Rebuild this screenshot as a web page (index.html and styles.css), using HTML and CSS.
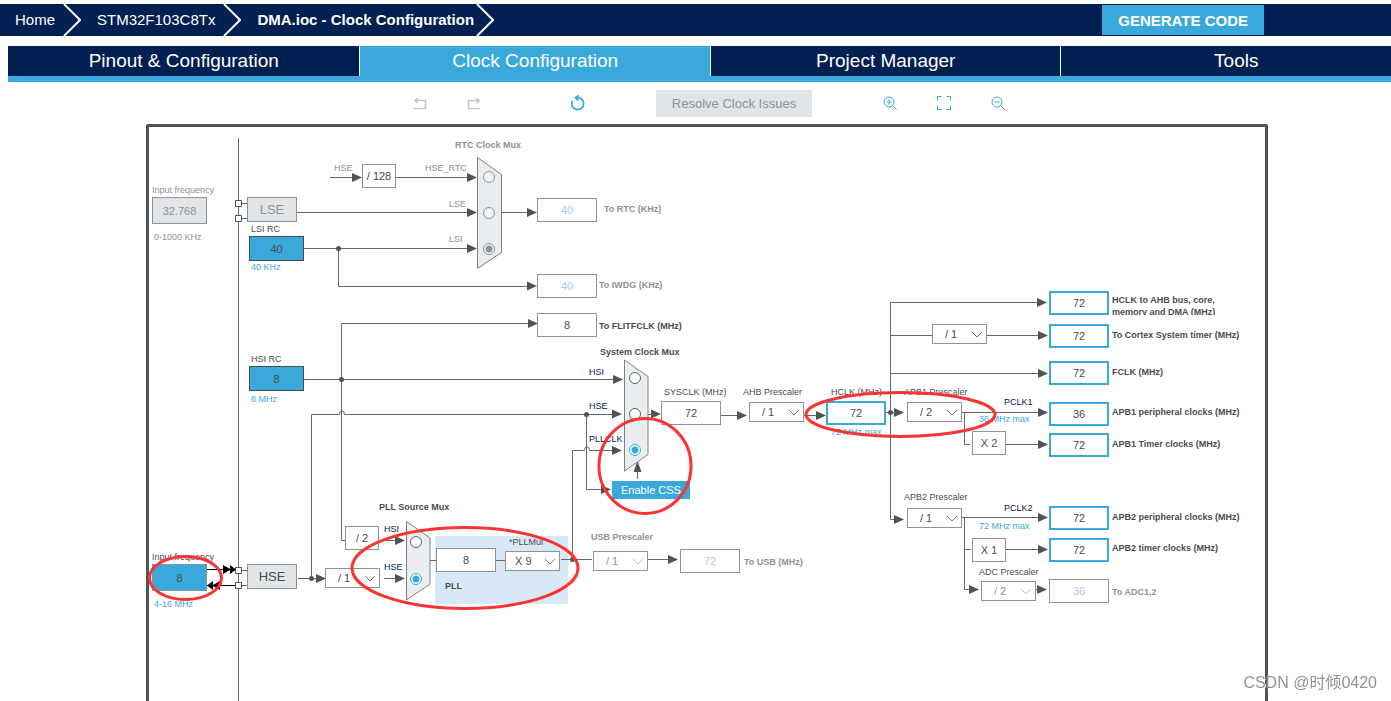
FILE: index.html
```html
<!DOCTYPE html>
<html lang="en">
<head>
<meta charset="utf-8">
<title>DMA.ioc - Clock Configuration</title>
<link rel="stylesheet" href="styles.css">
</head>
<body>
<header class="topbar">
  <nav class="crumbs">
    <a href="#">Home</a>
    <svg class="crumb-arrow" viewBox="0 0 18 32"><path d="M1 0 17 16 1 32"/></svg>
    <a href="#">STM32F103C8Tx</a>
    <svg class="crumb-arrow" viewBox="0 0 18 32"><path d="M1 0 17 16 1 32"/></svg>
    <a href="#" class="current">DMA.ioc - Clock Configuration</a>
    <svg class="crumb-arrow last" viewBox="0 0 18 32"><path d="M1 0 17 16 1 32"/></svg>
  </nav>
  <button class="generate">GENERATE CODE</button>
</header>

<nav class="tabs">
  <button>Pinout &amp; Configuration</button>
  <button class="active">Clock Configuration</button>
  <button>Project Manager</button>
  <button>Tools</button>
</nav>

<div class="toolbar">
  <div class="tools">
    <button class="tool off" aria-label="Undo"><svg viewBox="0 0 14 14"><path d="M1 12.500H12.500V4.500H2M4.500 2 2 4.500 4.500 7" stroke-width="1.600"/></svg></button>
    <button class="tool off" aria-label="Redo"><svg viewBox="0 0 14 14"><path d="M13 12.500H1.500V4.500H12M9.500 2 12 4.500 9.500 7" stroke-width="1.600"/></svg></button>
  </div>
  <button class="tool" aria-label="Reset"><svg viewBox="0 0 14 16"><path d="M1.200 6A6 6 0 1 0 5 2.800M7.500 .500 4.500 2.800 7.200 5.500" stroke-width="1.800"/></svg></button>
  <button class="resolve" disabled>Resolve Clock Issues</button>
  <div class="tools">
    <button class="tool" aria-label="Zoom in"><svg viewBox="0 0 14 14"><circle cx="6" cy="6" r="5"/><path d="M9.600 9.600 13.500 13.500M3.500 6H8.500M6 3.500V8.500"/></svg></button>
    <button class="tool" aria-label="Fit"><svg viewBox="0 0 14 14"><path d="M.500 4.500V.500H4.500M9.500 .500H13.500V4.500M13.500 9.500V13.500H9.500M4.500 13.500H.500V9.500"/></svg></button>
    <button class="tool" aria-label="Zoom out"><svg viewBox="0 0 14 14"><circle cx="6" cy="6" r="5"/><path d="M9.600 9.600 13.500 13.500M3.500 6H8.500"/></svg></button>
  </div>
</div>

<main class="canvas">
  <div class="frame"></div>
  <div class="pll-area"></div>

  <svg class="layer" viewBox="0 120 1391 581" width="1391" height="581">
    <defs>
      <path id="r" d="M-10 -4.500 0 0-10 4.500z"/>
      <path id="v" d="M-5 -2.500 0 2.500 5 -2.500"/>
    </defs>
    <g class="wire">
      <path d="M238.500 138V701"/>
      <path d="M241 203.500H247M241 218.500H247M241 570.500H247M241 585.500H247"/>
      <path d="M330 177.500H354M396 177.500H470M297 212.500H470M304 248.500H470M338.500 248.500V286.500H530M502 212.500H530"/>
      <path d="M304 379.500H616M530 323.500H341.500V540.500H345"/>
      <path d="M311.500 578.500V414.500H339.500A2 3 0 0 1 344.500 414.500H616"/>
      <path d="M298 578.500H318M384 578.500H398M379 540.500H398"/>
      <path d="M586.500 414.500V489.500H604M572.500 559.500V450.500H584.500A2 3 0 0 1 589.500 450.500H614"/>
      <path d="M430 560.500H436M496 560.500H505M561 559.500H592M637.500 479V470"/>
      <path d="M648 414.500H655M721 415.500H740M804 415.500H820M886 412.500H898"/>
      <path d="M1040 302.500H890.500V519.500H896M890.500 335.500H932M987 335.500H1040M890.500 373.500H1040"/>
      <path d="M962 412.500H1040M964.500 412.500V444.500H970M1006 444.500H1040"/>
      <path d="M962 517.500H1040M964.500 517.500V589.500H971M964.500 549.500H971M1006 549.500H1040M1036 589.500H1040M648 559.500H670"/>
      <path class="black" d="M207 569.500H235M207 585.500H235"/>
    </g>
    <g class="box">
      <path d="M235.500 200.500h6v6h-6zM235.500 215.500h6v6h-6zM235.500 567.500h6v6h-6zM235.500 582.500h6v6h-6z"/>
    </g>
    <g class="head">
      <use href="#r" x="362" y="177.500"/><use href="#r" x="477" y="177.500"/><use href="#r" x="477" y="212.500"/><use href="#r" x="477" y="248.500"/>
      <use href="#r" x="537" y="286"/><use href="#r" x="537" y="212.500"/><use href="#r" x="538" y="323.500"/>
      <use href="#r" x="623" y="379.500"/><use href="#r" x="622" y="414"/><use href="#r" x="622" y="450.500"/>
      <use href="#r" x="326" y="578.500"/><use href="#r" x="405" y="578.500"/><use href="#r" x="405" y="540.500"/>
      <use href="#r" x="611" y="489.500"/><use href="#r" x="661" y="414"/><use href="#r" x="747" y="415.500"/><use href="#r" x="826" y="415.500"/><use href="#r" x="904" y="412.500"/>
      <use href="#r" x="1047" y="302.500"/><use href="#r" x="1048" y="335.500"/><use href="#r" x="1048" y="373.500"/><use href="#r" x="1048" y="412.500"/><use href="#r" x="1048" y="444.500"/>
      <use href="#r" x="904" y="519.500"/><use href="#r" x="1048" y="517.500"/><use href="#r" x="1048" y="549.500"/><use href="#r" x="979" y="589.500"/><use href="#r" x="1047" y="589.500"/><use href="#r" x="678" y="559.500"/>
      <path d="M633.500 472 637.500 461 641.500 472z"/>
      <circle cx="338.500" cy="248.500" r="2.500"/><circle cx="341.500" cy="379.500" r="2.500"/><circle cx="311.500" cy="578.500" r="2.500"/>
      <circle cx="586.500" cy="414.500" r="2.500"/><circle cx="572.500" cy="559.500" r="2.500"/><circle cx="890.500" cy="412.500" r="2.500"/>
      <path class="black" d="M223 565 231 569.500 223 574zM230 565 236 569.500 230 574zM213 581 207 585.500 213 590zM220 581 212 585.500 220 590z"/>
    </g>
    <g class="mux">
      <path d="M477.500 157.500 501.500 174.500V252.500L477.500 268.500z"/>
      <path d="M624.500 360 648 376.500V454.500L624.500 471z"/>
      <path d="M406.500 521.500 430 538V584L406.500 600z"/>
    </g>
  </svg>

  <!-- Low-speed sources -->
  <label class="t in-lse-t dim" for="in-lse">Input frequency</label>
  <input class="val in-lse filled" id="in-lse" value="32.768" disabled>
  <span class="t in-lse-r dim">0-1000 KHz</span>
  <div class="src lse off">LSE</div>
  <label class="t lsi-t" for="lsi">LSI RC</label>
  <input class="val lsi rc" id="lsi" value="40" readonly>
  <span class="t lsi-r blue">40 KHz</span>

  <span class="t rtc-t dim strong">RTC Clock Mux</span>
  <span class="t rtc-hse0 dim">HSE</span>
  <div class="fix div128">/ 128</div>
  <label class="t rtc-hse dim" for="m1a">HSE_RTC</label>
  <label class="t rtc-lse dim" for="m1b">LSE</label>
  <label class="t rtc-lsi dim" for="m1c">LSI</label>
  <input type="radio" name="rtc" id="m1a" class="radio m1a" disabled>
  <input type="radio" name="rtc" id="m1b" class="radio m1b" disabled>
  <input type="radio" name="rtc" id="m1c" class="radio m1c" disabled checked>
  <input class="val rtc" id="rtc" value="40" disabled><label class="t rtc-o dim strong" for="rtc">To RTC (KHz)</label>
  <input class="val iwdg" id="iwdg" value="40" disabled><label class="t iwdg-o dim strong" for="iwdg">To IWDG (KHz)</label>
  <input class="val flit" id="flit" value="8" readonly><label class="t flit-o strong" for="flit">To FLITFCLK (MHz)</label>

  <!-- High-speed sources -->
  <label class="t hsi-t" for="hsi">HSI RC</label>
  <input class="val hsi rc" id="hsi" value="8" readonly>
  <span class="t hsi-r blue">8 MHz</span>
  <label class="t in-hse-t" for="in-hse">Input frequency</label>
  <input class="val in-hse rc" id="in-hse" value="8">
  <span class="t in-hse-r blue">4-16 MHz</span>
  <div class="src hse">HSE</div>
  <select class="pick p-hse" aria-label="HSE divider"><option>/ 1</option></select>
  <div class="fix div2">/ 2</div>

  <!-- PLL -->
  <span class="t pll-t strong">PLL Source Mux</span>
  <label class="t pll-hsi navy" for="m3a">HSI</label>
  <label class="t pll-hse navy" for="m3b">HSE</label>
  <input type="radio" name="pll" id="m3a" class="radio m3a">
  <input type="radio" name="pll" id="m3b" class="radio m3b" checked>
  <input class="val pll" value="8" aria-label="PLL input" readonly>
  <label class="t mul-t" for="mul">*PLLMul</label>
  <select class="pick p-mul" id="mul"><option>X 9</option></select>
  <span class="t pll-name strong">PLL</span>
  <label class="t usb-t dim strong" for="usbdiv">USB Prescaler</label>
  <select class="pick p-usb" id="usbdiv" disabled><option>/ 1</option></select>
  <input class="val usb" id="usb" value="72" disabled><label class="t usb-o dim strong" for="usb">To USB (MHz)</label>

  <!-- System clock -->
  <span class="t sys-t strong">System Clock Mux</span>
  <label class="t sys-hsi navy" for="m2a">HSI</label>
  <label class="t sys-hse navy" for="m2b">HSE</label>
  <label class="t sys-pll navy" for="m2c">PLLCLK</label>
  <input type="radio" name="sys" id="m2a" class="radio m2a">
  <input type="radio" name="sys" id="m2b" class="radio m2b">
  <input type="radio" name="sys" id="m2c" class="radio m2c" checked>
  <button class="css-btn">Enable CSS</button>
  <label class="t sysclk-t" for="sysclk">SYSCLK (MHz)</label>
  <input class="val sysclk" id="sysclk" value="72" readonly>
  <label class="t ahb-t" for="ahb">AHB Prescaler</label>
  <select class="pick p-ahb" id="ahb"><option>/ 1</option></select>
  <label class="t hclk-t" for="hclk">HCLK (MHz)</label>
  <input class="val hclk key" id="hclk" value="72">
  <span class="t hclk-r blue">72 MHz max</span>

  <!-- Bus clocks -->
  <select class="pick p-cortex" aria-label="Cortex prescaler"><option>/ 1</option></select>
  <label class="t apb1-t" for="apb1">APB1 Prescaler</label>
  <select class="pick p-apb1" id="apb1"><option>/ 2</option></select>
  <span class="t pclk1 navy">PCLK1</span>
  <span class="t pclk1-r blue">36 MHz max</span>
  <div class="fix x2">X 2</div>
  <label class="t apb2-t" for="apb2">APB2 Prescaler</label>
  <select class="pick p-apb2" id="apb2"><option>/ 1</option></select>
  <span class="t pclk2 navy">PCLK2</span>
  <span class="t pclk2-r blue">72 MHz max</span>
  <div class="fix x1">X 1</div>
  <label class="t adc-t" for="adcdiv">ADC Prescaler</label>
  <select class="pick p-adc" id="adcdiv" disabled><option>/ 2</option></select>

  <input class="val key o1" id="o1" value="72"><label class="t o1-t strong" for="o1">HCLK to AHB bus, core,<br>memory and DMA (MHz)</label>
  <input class="val key o2" id="o2" value="72"><label class="t o2-t strong" for="o2">To Cortex System timer (MHz)</label>
  <input class="val key o3" id="o3" value="72"><label class="t o3-t strong" for="o3">FCLK (MHz)</label>
  <input class="val key o4" id="o4" value="36"><label class="t o4-t strong" for="o4">APB1 peripheral clocks (MHz)</label>
  <input class="val key o5" id="o5" value="72"><label class="t o5-t strong" for="o5">APB1 Timer clocks (MHz)</label>
  <input class="val key o6" id="o6" value="72"><label class="t o6-t strong" for="o6">APB2 peripheral clocks (MHz)</label>
  <input class="val key o7" id="o7" value="72"><label class="t o7-t strong" for="o7">APB2 timer clocks (MHz)</label>
  <input class="val o8" id="o8" value="36" disabled><label class="t o8-t dim strong" for="o8">To ADC1,2</label>

  <svg class="layer" viewBox="0 120 1391 581" width="1391" height="581">
    <g class="chev">
      <use href="#v" x="370" y="578.500"/><use href="#v" x="550" y="561.500"/><use href="#v" x="794" y="412.500"/>
      <use href="#v" x="977" y="334.500"/><use href="#v" x="952" y="412.500"/><use href="#v" x="952" y="518.500"/>
      <use class="pale" href="#v" x="638" y="561.500"/><use class="pale" href="#v" x="1026" y="591.500"/>
    </g>
    <g class="ring">
      <ellipse cx="185.500" cy="578" rx="36" ry="21.500"/>
      <ellipse cx="465" cy="568" rx="113" ry="40.500"/>
      <ellipse cx="645" cy="466" rx="46" ry="47.500"/>
      <ellipse cx="900.500" cy="414.500" rx="94.500" ry="22"/>
    </g>
  </svg>
</main>
<div class="watermark">CSDN @时倾0420</div>
</body>
</html>
```
FILE: styles.css
```css
* { box-sizing: border-box; }
body {
  margin: 0;
  height: 100vh;
  display: flex;
  flex-direction: column;
  overflow: hidden;
  background: #fff;
  color: #4b4b4d;
  font-family: "Liberation Sans", Arial, sans-serif;
}
button, input, select { font-family: inherit; margin: 0; border-radius: 0; }
button { border: 0; padding: 0; }

.topbar {
  display: flex;
  align-items: center;
  height: 32px;
  margin-top: 4px;
  padding: 0 127px 0 15px;
  background: #002052;
  flex: none;
}
.crumbs { display: flex; align-items: center; }
.crumbs a { color: #fff; font-size: 15px; line-height: 32px; text-decoration: none; }
.crumbs .current { font-weight: bold; }
.crumb-arrow { width: 18px; height: 32px; margin: 0 16px 0 8px; fill: none; stroke: #fff; stroke-width: 2; }
.crumb-arrow.last { margin-left: 2px; }
.generate {
  margin-left: auto;
  padding: 0 16px;
  height: 30px;
  background: #39a9dc;
  color: #fff;
  font-size: 15px;
  font-weight: bold;
}

.tabs {
  display: grid;
  grid-template-columns: 352fr 350fr 350fr 350fr;
  gap: 1px;
  flex: none;
  margin: 10px -20px 0 8px;
  border-bottom: 6px solid #39a9dc;
}
.tabs button { height: 30px; background: #002052; color: #fff; font-size: 19px; }
.tabs .active { background: #39a9dc; }

.toolbar {
  display: flex;
  align-items: center;
  justify-content: center;
  gap: 71px;
  flex: none;
  height: 38px;
  padding: 4px 0 0 27px;
}
.tools { display: flex; gap: 40px; }
.tools:first-child { margin-right: 19px; }
.tool { display: flex; width: 14px; background: none; }
.tool svg { width: 14px; fill: none; stroke: #39a9dc; }
.tool.off svg { stroke: #c4c6c8; }
.resolve { width: 156px; height: 27px; background: #e1e5e8; color: #8c9499; font-size: 13px; }

.canvas { position: relative; flex: 1; overflow: hidden; }
.frame {
  position: absolute;
  inset: 4px 123px -4px 146px;
  border: 3px solid #4f5355;
  border-radius: 2px;
}
.pll-area { position: absolute; left: 435px; top: 416px; width: 133px; height: 68px; background: #d9e8f5; }
.layer { position: absolute; left: 0; top: 0; pointer-events: none; }
.wire { fill: none; stroke: #66696b; }
.wire .black { stroke: #000; }
.box { fill: #fff; stroke: #4f5355; }
.head { fill: #4f5355; }
.head .black { fill: #000; }
.mux { fill: #e9edf0; stroke: #7b8084; }
.chev { fill: none; stroke: #777b7e; }
.chev .pale { stroke: #c4c6c8; }
.ring { fill: none; stroke: #fa3434; stroke-width: 3; }

.t { position: absolute; font-size: 9px; line-height: 12px; white-space: nowrap; }
.dim { color: #8f9193; }
.blue { color: #39a9dc; }
.navy { color: #03234b; }
.strong { font-weight: bold; }

.val, .fix, .src {
  position: absolute;
  width: 60px;
  height: 24px;
  padding: 0;
  border: 1px solid #8c9499;
  background: #fff;
  color: #4b4b4d;
  font-size: 11px;
  line-height: 22px;
  text-align: center;
}
.val:disabled { color: #a9cbe3; }
.val.filled { background: #e1e5e8; color: #8c9499; }
.val.key { border: 2px solid #39a9dc; }
.val.rc { width: 55px; height: 25px; background: #39a9dc; border-color: #4b4b4d; }
.fix { width: 34px; }
.src { width: 50px; height: 25px; background: #e1e5e8; font-size: 13px; line-height: 23px; }
.src.off { color: #8c9499; }
.pick {
  position: absolute;
  width: 55px;
  height: 20px;
  padding: 0 0 0 12px;
  border: 1px solid #8c9499;
  background: #fff;
  color: #4b4b4d;
  font-size: 11px;
  appearance: none;
}
.pick:disabled { color: #8c9499; opacity: 1; }

.radio {
  position: absolute;
  width: 12px;
  height: 12px;
  margin: 0;
  appearance: none;
  border: 1px solid #5d6164;
  border-radius: 50%;
  background: #fff;
}
.radio:checked { border-color: #39a9dc; background: radial-gradient(circle, #39a9dc 3px, #fff 4px); }
.radio:disabled { border-color: #8c9499; background: #f1f3f5; }
.radio:disabled:checked { background: radial-gradient(circle, #8c9499 3px, #f1f3f5 4px); }
.css-btn {
  position: absolute;
  left: 612px;
  top: 361px;
  width: 78px;
  height: 18px;
  background: #39a9dc;
  color: #fff;
  font-size: 11px;
}

/* Node positions on the diagram */
.in-lse-t { left: 152px; top: 64px; }
.in-lse { left: 152px; top: 77px; width: 55px; height: 27px; }
.in-lse-r { left: 154px; top: 111px; }
.lse { left: 247px; top: 77px; }
.lsi-t { left: 251px; top: 103px; }
.lsi { left: 249px; top: 116px; }
.lsi-r { left: 251px; top: 141px; }
.rtc-t { left: 455px; top: 19px; }
.rtc-hse0 { left: 334px; top: 42px; }
.div128 { left: 362px; top: 44px; }
.rtc-hse { left: 425px; top: 42px; }
.rtc-lse { left: 449px; top: 78px; }
.rtc-lsi { left: 449px; top: 113px; }
.m1a { left: 483px; top: 51px; }
.m1b { left: 483px; top: 87px; }
.m1c { left: 483px; top: 123px; }
.rtc { left: 537px; top: 78px; }
.rtc-o { left: 604px; top: 83px; }
.iwdg { left: 537px; top: 154px; }
.iwdg-o { left: 599px; top: 159px; }
.flit { left: 537px; top: 193px; }
.flit-o { left: 599px; top: 200px; }

.hsi-t { left: 251px; top: 233px; }
.hsi { left: 249px; top: 246px; }
.hsi-r { left: 251px; top: 273px; }
.in-hse-t { left: 152px; top: 431px; }
.val.in-hse { left: 152px; top: 444px; height: 27px; border-color: #8c9499; }
.in-hse-r { left: 154px; top: 478px; }
.hse { left: 247px; top: 444px; }
.p-hse { left: 325px; top: 448px; }
.div2 { left: 345px; top: 406px; }

.pll-t { left: 379px; top: 381px; }
.pll-hsi { left: 384px; top: 403px; }
.pll-hse { left: 384px; top: 441px; }
.m3a { left: 410px; top: 416px; }
.m3b { left: 410px; top: 453px; }
.pll { left: 436px; top: 428px; }
.mul-t { left: 509px; top: 416px; }
.p-mul { left: 505px; top: 431px; padding-left: 9px; }
.pll-name { left: 445px; top: 460px; }
.usb-t { left: 591px; top: 411px; }
.p-usb { left: 593px; top: 431px; }
.usb { left: 680px; top: 429px; }
.usb-o { left: 744px; top: 436px; }

.sys-t { left: 600px; top: 226px; }
.sys-hsi { left: 589px; top: 246px; }
.sys-hse { left: 589px; top: 280px; }
.sys-pll { left: 589px; top: 313px; }
.m2a { left: 629px; top: 252px; }
.m2b { left: 629px; top: 288px; }
.m2c { left: 629px; top: 324px; }
.sysclk-t { left: 664px; top: 266px; }
.sysclk { left: 661px; top: 281px; }
.ahb-t { left: 743px; top: 266px; }
.p-ahb { left: 749px; top: 282px; }
.hclk-t { left: 831px; top: 266px; }
.hclk { left: 826px; top: 281px; }
.hclk-r { left: 831px; top: 306px; }

.p-cortex { left: 932px; top: 204px; }
.apb1-t { left: 904px; top: 266px; }
.p-apb1 { left: 907px; top: 282px; }
.pclk1 { left: 1004px; top: 276px; }
.pclk1-r { left: 979px; top: 293px; }
.x2 { left: 972px; top: 311px; }
.apb2-t { left: 904px; top: 371px; }
.p-apb2 { left: 907px; top: 388px; }
.pclk2 { left: 1004px; top: 382px; }
.pclk2-r { left: 979px; top: 400px; }
.x1 { left: 972px; top: 418px; }
.adc-t { left: 979px; top: 446px; }
.p-adc { left: 981px; top: 461px; }

.o1, .o2, .o3, .o4, .o5, .o6, .o7, .o8 { left: 1049px; }
.o1-t, .o2-t, .o3-t, .o4-t, .o5-t, .o6-t, .o7-t, .o8-t { left: 1112px; }
.o1 { top: 171px; }
.o2 { top: 204px; }
.o3 { top: 241px; }
.o4 { top: 282px; }
.o5 { top: 313px; }
.o6 { top: 386px; }
.o7 { top: 418px; }
.o8 { top: 459px; }
.o1-t { top: 174px; height: 21px; overflow: hidden; }
.o2-t { top: 209px; }
.o3-t { top: 246px; }
.o4-t { top: 286px; }
.o5-t { top: 318px; }
.o6-t { top: 391px; }
.o7-t { top: 422px; }
.o8-t { top: 466px; }

.watermark {
  position: fixed;
  right: 14px;
  bottom: 8px;
  color: #8f9193;
  font: 16px/20px "Liberation Sans", "Noto Sans CJK SC", sans-serif;
  text-shadow: 1px 1px 0 #fff;
}
```
